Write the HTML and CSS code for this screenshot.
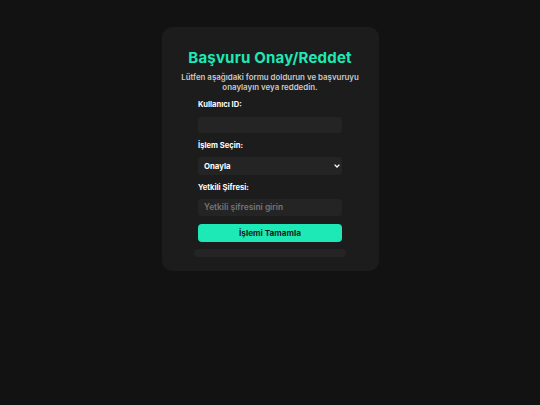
FILE: index.html
```html
<!DOCTYPE html>
<html lang="tr">
<head>
<meta charset="utf-8">
<title>Başvuru Onay/Reddet</title>
<link rel="stylesheet" href="styles.css">
</head>
<body>
<div class="card">
  <h1 class="title">Başvuru Onay/Reddet</h1>
  <p class="subtitle">Lütfen aşağıdaki formu doldurun ve başvuruyu onaylayın veya reddedin.</p>
  <form class="form">
    <label class="label" for="uid">Kullanıcı ID:</label>
    <input class="field" id="uid" type="text">
    <label class="label" for="op">İşlem Seçin:</label>
    <div class="select-wrap">
      <select class="field select" id="op">
        <option>Onayla</option>
        <option>Reddet</option>
      </select>
      <svg class="chevron" width="6" height="4" viewBox="0 0 6 4"><path d="M0.6 0.6 L3 3 L5.4 0.6" fill="none" stroke="#fff" stroke-width="1.3"/></svg>
    </div>
    <label class="label" for="pw">Yetkili Şifresi:</label>
    <input class="field" id="pw" type="password" placeholder="Yetkili şifresini girin">
    <button class="btn" type="button">İşlemi Tamamla</button>
  </form>
  <div class="message"></div>
</div>
</body>
</html>
```
FILE: styles.css
```css
* { box-sizing: border-box; }
body {
  margin: 0;
  background: #121212;
  font-family: "Inter", "Open Sans", sans-serif;
  color: #fff;
}
.card {
  width: 217px;
  margin: 27px auto 0;
  background: #1c1c1c;
  border-radius: 10px;
  padding: 22px 0 14px;
  display: flex;
  flex-direction: column;
  align-items: center;
}
.title {
  margin: 0;
  font-size: 15px;
  line-height: 18px;
  font-weight: 700;
  color: #1de9b6;
  letter-spacing: 0.2px;
}
.subtitle {
  margin: 5px 0 0;
  width: 200px;
  text-align: center;
  font-size: 7.9px;
  line-height: 10px;
  font-weight: 600;
  color: #cacaca;
}
.form {
  width: 144px;
  display: flex;
  flex-direction: column;
  margin-top: 8px;
}
.label {
  font-size: 7.6px;
  line-height: 10px;
  font-weight: 700;
  color: #fff;
  margin-bottom: 6.5px;
}
.field {
  display: block;
  width: 100%;
  height: 16.5px;
  border: none;
  border-radius: 3px;
  background: #242424;
  color: #fff;
  font-family: inherit;
  font-size: 7.8px;
  padding: 0 6px;
  margin-bottom: 7.5px;
  outline: none;
}
.field::placeholder { color: #767676; font-weight: 600; font-size: 8.4px; }
.select-wrap { position: relative; }
.select {
  -webkit-appearance: none;
  appearance: none;
  height: 18px;
  font-weight: 700;
}
.chevron {
  position: absolute;
  right: 2px;
  top: 7px;
}
.btn {
  margin-top: 1px;
  height: 18px;
  border: none;
  border-radius: 4px;
  background: #1de9b6;
  color: #1a1a1a;
  font-family: inherit;
  font-size: 8.2px;
  font-weight: 700;
}
.message {
  width: 152px;
  height: 8px;
  margin-top: 7px;
  border-radius: 4px;
  background: #242424;
}
```
